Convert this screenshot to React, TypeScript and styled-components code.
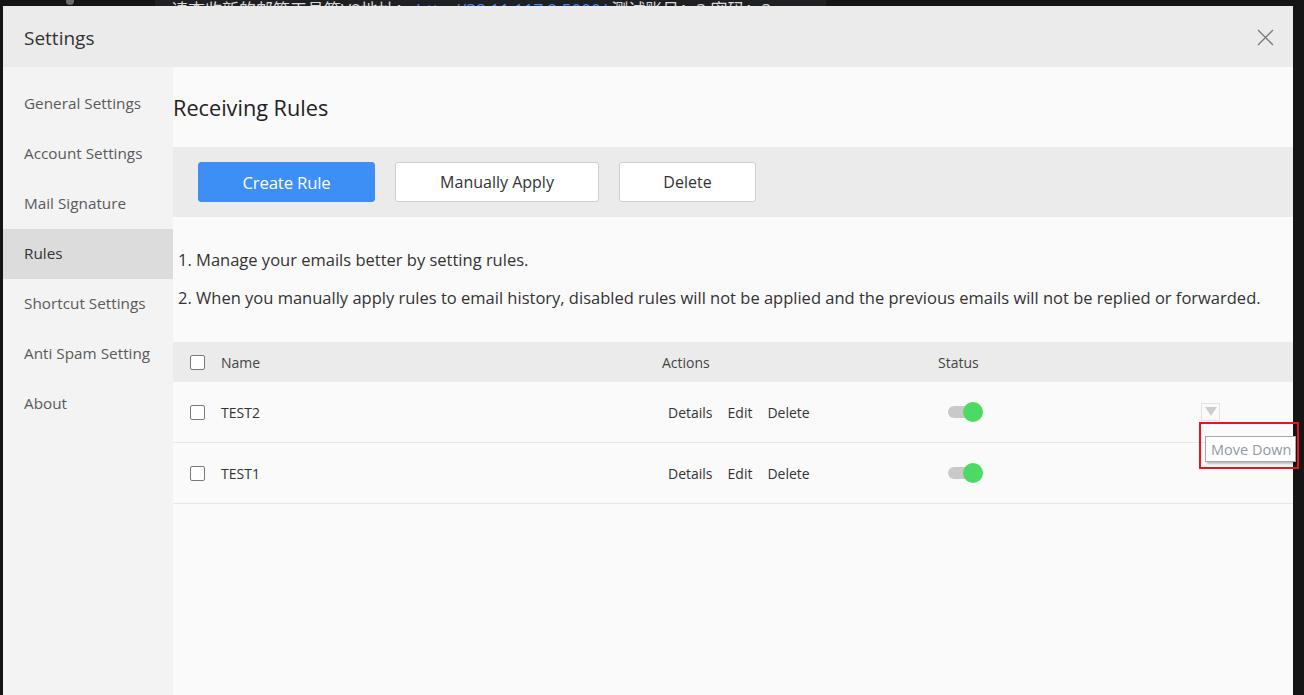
import styled, { createGlobalStyle } from 'styled-components';

const FONT = `"Open Sans", "Noto Sans CJK SC", sans-serif`;

const GlobalStyle = createGlobalStyle`
  html, body {
    margin: 0;
    padding: 0;
    background: #151515;
    font-family: ${FONT};
    overflow: hidden;
  }
  #root {
    height: 100vh;
  }
`;

const Page = styled.div`
  height: 100vh;
  display: flex;
  flex-direction: column;
  background: #151515;
`;

const Backdrop = styled.div`
  height: 6px;
  overflow: hidden;
  display: flex;
  flex-shrink: 0;
`;

const BackdropKnob = styled.div`
  width: 8px;
  height: 8px;
  border-radius: 50%;
  background: #6b6b6b;
  margin: -3px 0 0 66px;
`;

const BackdropPanel = styled.div`
  margin-left: 81px;
  width: 655px;
  background: #1f2023;
  color: #d8d8d8;
  font-size: 17px;
  line-height: 20px;
  white-space: nowrap;
  padding-left: 16px;
  > span {
    display: inline-block;
    margin-top: -15px;
  }
`;

const Link = styled.span`
  color: #3d8ff5;
`;

const Dialog = styled.div`
  flex: 1;
  margin-left: 3px;
  width: 1290px;
  display: flex;
  flex-direction: column;
  background: #fafafa;
`;

const Header = styled.header`
  height: 61px;
  flex-shrink: 0;
  background: #ebebeb;
  display: flex;
  align-items: center;
  justify-content: space-between;
  padding: 2px 19px 0 21px;
  box-sizing: border-box;
`;

const DialogTitle = styled.h1`
  margin: 0;
  font-weight: 400;
  font-size: 19px;
  color: #333;
`;

const CloseButton = styled.button`
  border: none;
  background: none;
  padding: 0;
  width: 17px;
  height: 17px;
  display: flex;
  cursor: pointer;
`;

const Body = styled.div`
  flex: 1;
  display: flex;
  min-height: 0;
`;

const Sidebar = styled.nav`
  width: 170px;
  flex-shrink: 0;
  background: #f3f3f3;
  padding-top: 12px;
  display: flex;
  flex-direction: column;
`;

const NavItem = styled.div<{ $active?: boolean }>`
  height: 50px;
  display: flex;
  align-items: center;
  padding: 0 0 2px 21px;
  box-sizing: border-box;
  font-size: 15.3px;
  color: ${(p) => (p.$active ? '#333' : '#5a5a5a')};
  background: ${(p) => (p.$active ? '#dcdcdc' : 'transparent')};
`;

const Main = styled.main`
  flex: 1;
  background: #fafafa;
  display: flex;
  flex-direction: column;
`;

const Title = styled.h2`
  margin: 0;
  height: 80px;
  display: flex;
  align-items: center;
  font-weight: 400;
  font-size: 21.7px;
  color: #222;
`;

const Toolbar = styled.div`
  height: 70px;
  background: #ebebeb;
  display: flex;
  align-items: center;
  gap: 20px;
  padding-left: 25px;
`;

const Button = styled.button<{ $primary?: boolean; $width: number }>`
  width: ${(p) => p.$width}px;
  height: 40px;
  border-radius: 3px;
  font-family: ${FONT};
  font-size: ${(p) => (p.$primary ? '16.8px' : '16px')};
  cursor: pointer;
  border: 1px solid ${(p) => (p.$primary ? '#3d8ff5' : '#cfcfcf')};
  background: ${(p) => (p.$primary ? '#3d8ff5' : '#fff')};
  color: ${(p) => (p.$primary ? '#fff' : '#333')};
  letter-spacing: ${(p) => (p.$primary ? '-0.2px' : '0')};
`;

const Notes = styled.div`
  padding: 24px 0 25px 5px;
`;

const Note = styled.p`
  margin: 0;
  line-height: 38px;
  font-size: 16.5px;
  color: #333;
  white-space: nowrap;
`;

const Table = styled.div`
  display: flex;
  flex-direction: column;
`;

const Row = styled.div<{ $head?: boolean }>`
  display: grid;
  grid-template-columns: 48px 441px 276px 263px 1fr;
  align-items: center;
  height: ${(p) => (p.$head ? '40px' : '60px')};
  background: ${(p) => (p.$head ? '#ebebeb' : 'transparent')};
  border-bottom: ${(p) => (p.$head ? 'none' : '1px solid #e6e6e6')};
  font-size: 14px;
  color: ${(p) => (p.$head ? '#444' : '#333')};
`;

const CheckCell = styled.div`
  padding-left: 17px;
  display: flex;
`;

const Checkbox = styled.span`
  width: 13px;
  height: 13px;
  border: 1px solid #7a7a7a;
  border-radius: 2px;
  background: #fff;
`;

const Actions = styled.div`
  display: flex;
  gap: 15px;
  padding-left: 6px;
`;

const ActionLink = styled.span`
  cursor: pointer;
`;

const StatusCell = styled.div`
  padding-left: 10px;
  display: flex;
`;

const Toggle = styled.span`
  position: relative;
  width: 35px;
  height: 20px;
  display: block;
  &::before {
    content: '';
    position: absolute;
    left: 0;
    top: 4px;
    width: 26px;
    height: 12px;
    border-radius: 6px;
    background: #c9c9c9;
  }
  &::after {
    content: '';
    position: absolute;
    left: 15px;
    top: 0;
    width: 20px;
    height: 20px;
    border-radius: 50%;
    background: #4cd964;
  }
`;

const MoveCell = styled.div`
  position: relative;
  display: flex;
  align-self: stretch;
  align-items: center;
`;

const MoveButton = styled.span`
  width: 19px;
  height: 18px;
  border: 1px solid #e2e2e2;
  background: #fafafa;
  display: flex;
  justify-content: center;
  padding-top: 3px;
  box-sizing: border-box;
  margin-top: -1px;
  &::after {
    content: '';
    border-left: 6px solid transparent;
    border-right: 6px solid transparent;
    border-top: 9px solid #cdcdcd;
    height: 0;
  }
`;

const Tooltip = styled.div`
  position: absolute;
  left: 4px;
  top: 54px;
  height: 24px;
  padding: 0 4px 0 5px;
  display: flex;
  align-items: center;
  background: #fff;
  border: 1px solid #a8a8a8;
  box-shadow: 2px 2px 2px rgba(0, 0, 0, 0.25);
  font-size: 14.5px;
  color: #8e9aa8;
  white-space: nowrap;
  z-index: 2;
`;

const Highlight = styled.div`
  position: absolute;
  left: -2px;
  top: 40px;
  width: 96px;
  height: 43px;
  border: 2px solid #e8141c;
  z-index: 3;
`;

const navItems = [
  'General Settings',
  'Account Settings',
  'Mail Signature',
  'Rules',
  'Shortcut Settings',
  'Anti Spam Setting',
  'About',
];

const rules = ['TEST2', 'TEST1'];

export default function App() {
  return (
    <Page>
      <GlobalStyle />
      <Backdrop>
        <BackdropKnob />
        <BackdropPanel>
          <span>
            请查收新的邮箱工具箱V2地址： <Link>http://38.11.117.2:5000/</Link> 测试账号：3,密码：3
          </span>
        </BackdropPanel>
      </Backdrop>
      <Dialog>
        <Header>
          <DialogTitle>Settings</DialogTitle>
          <CloseButton aria-label="Close">
            <svg width="17" height="17" viewBox="0 0 17 17">
              <path d="M1 1L16 16M16 1L1 16" stroke="#7a7a7a" strokeWidth="1.3" fill="none" />
            </svg>
          </CloseButton>
        </Header>
        <Body>
          <Sidebar>
            {navItems.map((item) => (
              <NavItem key={item} $active={item === 'Rules'}>
                {item}
              </NavItem>
            ))}
          </Sidebar>
          <Main>
            <Title>Receiving Rules</Title>
            <Toolbar>
              <Button $primary $width={177}>
                Create Rule
              </Button>
              <Button $width={204}>Manually Apply</Button>
              <Button $width={137}>Delete</Button>
            </Toolbar>
            <Notes>
              <Note>1. Manage your emails better by setting rules.</Note>
              <Note>
                2. When you manually apply rules to email history, disabled rules will not be applied and
                the previous emails will not be replied or forwarded.
              </Note>
            </Notes>
            <Table>
              <Row $head>
                <CheckCell>
                  <Checkbox />
                </CheckCell>
                <span>Name</span>
                <span>Actions</span>
                <span>Status</span>
                <span />
              </Row>
              {rules.map((name, i) => (
                <Row key={name}>
                  <CheckCell>
                    <Checkbox />
                  </CheckCell>
                  <span>{name}</span>
                  <Actions>
                    <ActionLink>Details</ActionLink>
                    <ActionLink>Edit</ActionLink>
                    <ActionLink>Delete</ActionLink>
                  </Actions>
                  <StatusCell>
                    <Toggle />
                  </StatusCell>
                  <MoveCell>
                    {i === 0 && (
                      <>
                        <MoveButton />
                        <Tooltip>Move Down</Tooltip>
                        <Highlight />
                      </>
                    )}
                  </MoveCell>
                </Row>
              ))}
            </Table>
          </Main>
        </Body>
      </Dialog>
    </Page>
  );
}
